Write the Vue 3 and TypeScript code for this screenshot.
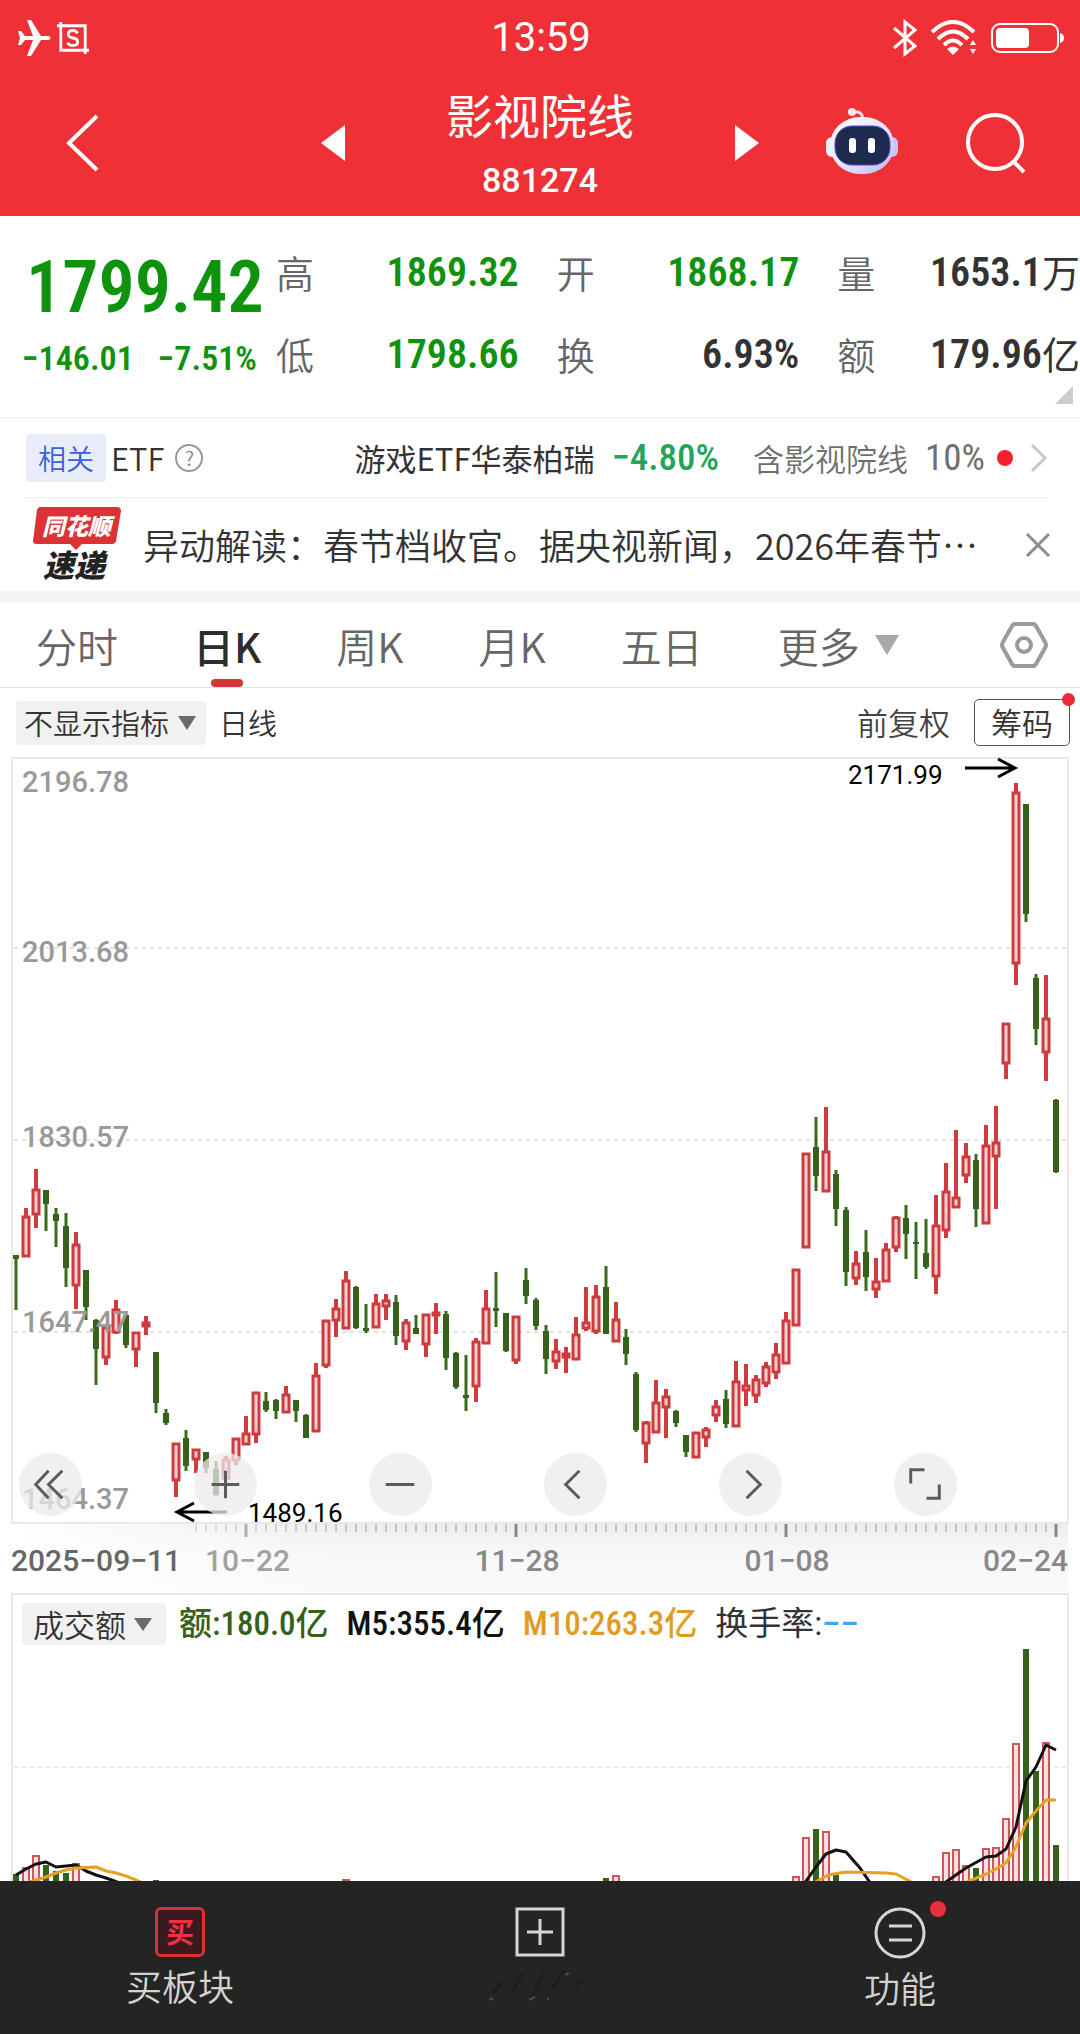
<script setup lang="ts">
type Candle = [up: number, high: number, top: number, bottom: number, low: number]

// up flag, then high, body top, body bottom and low as heights on the price panel
const candles: Candle[] = [
  [0, 1255, 1255, 1259, 1310], [1, 1208, 1216, 1257, 1257], [1, 1169, 1189, 1215, 1228], [0, 1190, 1190, 1204, 1231],
  [0, 1208, 1214, 1221, 1247], [0, 1213, 1226, 1268, 1287], [1, 1232, 1244, 1286, 1309], [0, 1270, 1270, 1307, 1320],
  [0, 1319, 1320, 1349, 1385], [1, 1325, 1327, 1358, 1365], [1, 1300, 1309, 1333, 1334], [0, 1314, 1315, 1345, 1348],
  [1, 1332, 1332, 1350, 1367], [1, 1316, 1322, 1327, 1335], [0, 1352, 1352, 1403, 1413], [0, 1409, 1413, 1423, 1425],
  [1, 1443, 1443, 1481, 1497], [0, 1430, 1438, 1466, 1471], [1, 1449, 1449, 1460, 1473], [0, 1452, 1452, 1468, 1473],
  [0, 1461, 1469, 1495, 1496], [1, 1456, 1459, 1479, 1479], [1, 1438, 1438, 1461, 1465], [1, 1416, 1433, 1445, 1445],
  [1, 1392, 1392, 1435, 1443], [0, 1392, 1401, 1410, 1412], [0, 1399, 1400, 1411, 1419], [1, 1386, 1394, 1413, 1413],
  [0, 1400, 1400, 1411, 1422], [0, 1414, 1415, 1438, 1438], [1, 1363, 1375, 1432, 1432], [1, 1320, 1320, 1366, 1368],
  [1, 1299, 1308, 1321, 1337], [1, 1271, 1280, 1329, 1329], [0, 1286, 1287, 1328, 1329], [0, 1304, 1328, 1331, 1333],
  [1, 1294, 1303, 1328, 1328], [1, 1294, 1300, 1307, 1320], [0, 1295, 1302, 1336, 1345], [1, 1319, 1322, 1342, 1350],
  [0, 1315, 1328, 1334, 1334], [1, 1314, 1314, 1345, 1357], [1, 1303, 1312, 1315, 1334], [0, 1311, 1314, 1358, 1370],
  [0, 1352, 1353, 1387, 1389], [0, 1355, 1395, 1398, 1411], [1, 1338, 1341, 1387, 1402], [1, 1290, 1308, 1344, 1344],
  [0, 1272, 1308, 1311, 1327], [0, 1313, 1313, 1351, 1352], [1, 1316, 1316, 1361, 1364], [0, 1268, 1280, 1296, 1304],
  [0, 1298, 1300, 1326, 1330], [0, 1325, 1331, 1359, 1374], [1, 1339, 1351, 1362, 1369], [1, 1347, 1353, 1358, 1373],
  [1, 1317, 1334, 1360, 1360], [1, 1287, 1322, 1329, 1331], [1, 1285, 1296, 1332, 1334], [0, 1266, 1287, 1334, 1334],
  [1, 1302, 1319, 1342, 1342], [0, 1329, 1337, 1354, 1365], [0, 1372, 1374, 1430, 1432], [1, 1421, 1422, 1444, 1463],
  [1, 1380, 1402, 1433, 1433], [1, 1389, 1396, 1408, 1438], [0, 1410, 1411, 1423, 1427], [0, 1435, 1435, 1452, 1457],
  [1, 1432, 1432, 1458, 1458], [1, 1427, 1429, 1438, 1447], [1, 1400, 1406, 1416, 1422], [0, 1390, 1399, 1424, 1428],
  [1, 1361, 1381, 1427, 1427], [1, 1364, 1385, 1391, 1406], [1, 1375, 1379, 1396, 1403], [1, 1362, 1366, 1384, 1387],
  [1, 1343, 1354, 1373, 1379], [1, 1312, 1320, 1364, 1364], [1, 1269, 1269, 1326, 1326], [1, 1153, 1153, 1248, 1248],
  [0, 1117, 1147, 1176, 1191], [1, 1107, 1151, 1192, 1192], [0, 1170, 1174, 1209, 1226], [0, 1207, 1210, 1272, 1286],
  [1, 1251, 1263, 1279, 1285], [0, 1230, 1252, 1277, 1291], [1, 1258, 1281, 1290, 1298], [1, 1243, 1249, 1282, 1282],
  [1, 1216, 1217, 1248, 1252], [0, 1205, 1218, 1234, 1259], [0, 1222, 1242, 1244, 1279], [0, 1219, 1253, 1267, 1269],
  [1, 1195, 1225, 1277, 1294], [1, 1163, 1191, 1231, 1238], [1, 1130, 1197, 1208, 1208], [1, 1143, 1156, 1176, 1183],
  [0, 1154, 1160, 1209, 1227], [1, 1125, 1145, 1224, 1224], [1, 1106, 1142, 1157, 1209], [1, 1023, 1023, 1064, 1079],
  [1, 783, 792, 964, 985], [0, 804, 804, 914, 922], [0, 974, 978, 1029, 1045], [1, 975, 1018, 1053, 1081],
  [0, 1099, 1100, 1172, 1173],
]

// day index, up flag, top of the bar on the turnover panel
const volumes: [number, number, number][] = [
  [0, 0, 1874], [1, 1, 1867], [2, 1, 1855], [3, 0, 1865], [4, 0, 1871], [5, 0, 1873], [6, 1, 1863], [14, 0, 1880],
  [33, 1, 1879], [59, 0, 1878], [60, 1, 1875], [78, 1, 1876], [79, 1, 1837], [80, 0, 1829], [81, 1, 1831],
  [82, 0, 1875], [92, 1, 1876], [93, 1, 1852], [94, 1, 1849], [95, 1, 1865], [96, 0, 1868], [97, 1, 1848],
  [98, 1, 1847], [99, 1, 1818], [100, 1, 1743], [101, 0, 1649], [102, 0, 1771], [103, 1, 1742], [104, 0, 1845],
]

const ma5 = [
  '16,1875 26,1869 36,1864 46,1862 56,1867 66,1866 76,1865 86,1871 96,1875 106,1878 120,1883',
  '804,1884 816,1867 826,1854 836,1850 846,1852 860,1868 871,1884',
  '943,1884 966,1868 986,1857 996,1856 1006,1849 1016,1827 1026,1781 1036,1767 1046,1745 1056,1750',
]
const ma10 = [
  '26,1883 46,1877 56,1873 66,1870 76,1868 96,1867 106,1871 116,1873 126,1876 143,1883',
  '812,1884 828,1875 846,1872 886,1873 896,1874 915,1884',
  '962,1884 986,1874 996,1869 1006,1863 1016,1847 1026,1823 1036,1811 1046,1800 1056,1800',
]

const dayX = (i: number): number => 16 + i * 10
const gridLines = [948, 1140, 1332]
const priceLabels = [
  { y: 792, text: '2196.78' },
  { y: 962, text: '2013.68' },
  { y: 1147, text: '1830.57' },
  { y: 1332, text: '1647.47' },
  { y: 1509, text: '1464.37' },
]
const ticks = Array.from({ length: 87 }, (_, k) => ({ x: 196 + k * 10, major: k % 27 === 5 }))
const dates = [
  { x: 205, anchor: 'start', text: '10−22', cls: 'faint' },
  { x: 517, anchor: 'middle', text: '11−28', cls: '' },
  { x: 787, anchor: 'middle', text: '01−08', cls: '' },
  { x: 1068, anchor: 'end', text: '02−24', cls: '' },
]
const stats = [
  { k: '高', v: '1869.32', down: true }, { k: '开', v: '1868.17', down: true }, { k: '量', v: '1653.1', unit: '万' },
  { k: '低', v: '1798.66', down: true }, { k: '换', v: '6.93%' }, { k: '额', v: '179.96', unit: '亿' },
]
const tabs = ['分时', '日K', '周K', '月K', '五日']
const tools = [
  { label: '最早', d: 'M30 18L17 32L30 46M44 18L30 32L44 46' },
  { label: '放大', d: 'M32 18V46M18 32H46' },
  { label: '缩小', d: 'M17 32H46' },
  { label: '向左', d: 'M36 18L22 32L36 46' },
  { label: '向右', d: 'M28 18L42 32L28 46' },
  { label: '全屏', d: 'M17 31V17H31M33 46H46V32' },
]
</script>

<template>
  <div class="page">
    <div class="status">
      <div class="status-side">
        <svg width="34" height="36" viewBox="0 0 34 36" fill="#fff">
          <path d="M0 11h3l4 5h8L9 0h4l10 16h8q3 2 0 4h-8L13 36H9l6-16H7l-4 5H0l2-7z" />
        </svg>
        <svg width="32" height="32" viewBox="0 0 34 34" fill="none" stroke="#fff" stroke-width="3">
          <path d="M4 0V30H34M0 4H30V34" />
          <path d="M22 12Q20 9 17 9Q12 9 12 13Q12 16 17 17Q22 18 22 21Q22 25 17 25Q13 25 11 22" />
        </svg>
      </div>
      <time>13:59</time>
      <div class="status-side right">
        <svg width="26" height="38" viewBox="0 0 26 38" fill="none" stroke="#fff" stroke-width="3">
          <path d="M2 9L23 27L13 35V3L23 11L2 29" />
        </svg>
        <svg width="48" height="36" viewBox="0 0 48 36" fill="none" stroke="#fff" stroke-width="4">
          <path d="M2 12Q23-8 44 12M8 19Q23 4 38 19M14 25Q23 16 32 25" />
          <path d="M17 29Q23 24 29 29L23 35zM40 25L43 20L46 25zM40 29L43 34L46 29z" fill="#fff" stroke="none" />
        </svg>
        <svg width="74" height="32" viewBox="0 0 74 32">
          <rect x="2" y="2" width="66" height="28" rx="8" fill="none" stroke="#fff" stroke-width="2" />
          <rect x="6" y="6" width="33" height="20" rx="4" fill="#fff" />
          <path d="M70 11q4 1 4 5t-4 5z" fill="#fff" />
        </svg>
      </div>
    </div>

    <header class="head">
      <div class="head-side">
        <button aria-label="返回">
          <svg width="36" height="60" viewBox="0 0 36 60" fill="none" stroke="#fff" stroke-width="4">
            <path d="M33 3L5 30L33 57" />
          </svg>
        </button>
        <button aria-label="上一个">
          <svg width="24" height="36" viewBox="0 0 24 36" fill="#fff"><path d="M24 0V36L0 18z" /></svg>
        </button>
      </div>
      <div class="title">
        <h1>影视院线</h1>
        <p>881274</p>
      </div>
      <div class="head-side end">
        <button aria-label="下一个">
          <svg width="24" height="36" viewBox="0 0 24 36" fill="#fff"><path d="M0 0V36L24 18z" /></svg>
        </button>
        <button aria-label="智能助手">
          <svg width="72" height="72" viewBox="0 0 72 72">
            <defs>
              <linearGradient id="shell" x1="0" y1="0" x2="1" y2="1">
                <stop offset="0" stop-color="#fff" /><stop offset="0.5" stop-color="#e8e6fa" />
                <stop offset="1" stop-color="#b9b9f2" />
              </linearGradient>
            </defs>
            <path d="M26 5Q36 3 37 12" fill="none" stroke="#f6dfe6" stroke-width="3" />
            <circle cx="26" cy="5" r="4" fill="#fbe6ea" />
            <rect x="0" y="30" width="12" height="20" rx="6" fill="#eef0fb" />
            <rect x="60" y="30" width="12" height="20" rx="6" fill="#c6c4f3" />
            <rect x="4" y="10" width="64" height="57" rx="30" fill="url(#shell)" />
            <rect x="9" y="19" width="55" height="39" rx="17" fill="#1f2a4f" stroke="#5a4bd0" stroke-width="1" />
            <rect x="23" y="31" width="7" height="15" rx="3" fill="#fff" />
            <rect x="42" y="31" width="7" height="15" rx="3" fill="#fff" />
          </svg>
        </button>
        <button aria-label="搜索">
          <svg width="62" height="62" viewBox="0 0 62 62" fill="none" stroke="#fff" stroke-width="4">
            <circle cx="30" cy="30" r="27" /><path d="M48 49L59 60" />
          </svg>
        </button>
      </div>
    </header>

    <section class="quote">
      <div class="last">
        <strong>1799.42</strong>
        <div class="change"><span>−146.01</span><span>−7.51%</span></div>
      </div>
      <dl class="stats">
        <div v-for="s in stats" :key="s.k">
          <dt>{{ s.k }}</dt>
          <dd :class="{ down: s.down }">{{ s.v }}<span v-if="s.unit">{{ s.unit }}</span></dd>
        </div>
      </dl>
      <i class="corner"></i>
    </section>

    <section class="etf">
      <span class="badge">相关</span>
      <span class="etf-name">ETF</span>
      <button class="help" aria-label="说明">?</button>
      <a href="#" class="fund">游戏ETF华泰柏瑞</a>
      <span class="fund-pct">−4.80%</span>
      <span class="hold">含影视院线</span>
      <span class="hold-pct">10%</span>
      <i class="dot"></i>
      <svg width="18" height="30" viewBox="0 0 18 30" fill="none" stroke="#c8c8c8" stroke-width="3">
        <path d="M2 2L15 15L2 28" />
      </svg>
    </section>

    <section class="news">
      <div class="logo">
        <svg viewBox="0 0 88 44" width="88" height="44" fill="#dc3236">
          <path d="M7 0H84Q88 0 88 4L83 34Q82 37 79 37H49L43 43L37 37H3Q0 37 0 34L4 3Q5 0 7 0z" />
        </svg>
        <b class="logo-top">同花顺</b>
        <b class="logo-bottom">速递</b>
      </div>
      <a href="#">异动解读：春节档收官。据央视新闻，2026年春节…</a>
      <button aria-label="关闭">
        <svg width="26" height="26" viewBox="0 0 26 26" stroke="#8c8c8c" stroke-width="3">
          <path d="M2 2L24 24M24 2L2 24" />
        </svg>
      </button>
    </section>

    <nav class="tabs">
      <button v-for="t in tabs" :key="t" :class="{ active: t === '日K' }">{{ t }}</button>
      <button class="more">
        更多
        <svg width="24" height="20" viewBox="0 0 24 20" fill="#a8a8a8"><path d="M0 0H24L12 20z" /></svg>
      </button>
      <button class="gear" aria-label="设置">
        <svg width="50" height="48" viewBox="0 0 50 48" fill="none" stroke="#9a9a9a" stroke-width="4">
          <path d="M16 3H34Q36 3 37 5L46 21Q48 24 46 27L37 43Q36 45 34 45H16Q14 45 13 43L4 27Q2 24 4 21L13 5Q14 3 16 3z" />
          <circle cx="25" cy="24" r="7" />
        </svg>
      </button>
    </nav>

    <div class="toolbar">
      <label class="picker">
        <select aria-label="主图指标"><option>不显示指标</option></select>
        <svg width="18" height="14" viewBox="0 0 18 14" fill="#6b6b6b"><path d="M0 0H18L9 14z" /></svg>
      </label>
      <span class="period">日线</span>
      <button class="adjust">前复权</button>
      <button class="chips">筹码<i></i></button>
    </div>

    <section class="chart">
      <svg class="plot" viewBox="0 757 1080 836">
        <defs>
          <linearGradient id="strip" x1="0" y1="0" x2="0" y2="1">
            <stop offset="0" stop-color="#ededed" /><stop offset="0.4" stop-color="#f7f7f7" />
            <stop offset="1" stop-color="#fafafa" />
          </linearGradient>
          <linearGradient id="veil" x1="0" y1="0" x2="1" y2="0">
            <stop offset="0" stop-color="#fff" /><stop offset="1" stop-color="#fff" stop-opacity="0" />
          </linearGradient>
        </defs>
        <rect x="12" y="1523" width="1056" height="70" fill="url(#strip)" />
        <line
          v-for="t in ticks" :key="t.x" :x1="t.x" :x2="t.x" y1="1524" :y2="t.major ? 1537 : 1532"
          :class="t.major ? 'tick major' : 'tick'"
        />
        <rect x="12" y="1524" width="340" height="69" fill="url(#veil)" />
        <rect x="12" y="758" width="1056" height="765" class="frame" />
        <line v-for="y in gridLines" :key="y" x1="14" x2="1068" :y1="y" :y2="y" class="grid" />
        <g v-for="(c, i) in candles" :key="i" :class="c[0] ? 'up' : 'dn'">
          <line :x1="dayX(i)" :x2="dayX(i)" :y1="c[1]" :y2="c[4]" />
          <rect v-if="c[0]" :x="dayX(i) - 3" :y="c[2] + 1" width="6" :height="Math.max(c[3] - c[2] - 2, 2)" />
          <rect v-else :x="dayX(i) - 3" :y="c[2]" width="6" :height="c[3] - c[2]" />
        </g>
        <text v-for="l in priceLabels" :key="l.y" x="22" :y="l.y" class="price">{{ l.text }}</text>
        <g class="mark">
          <path d="M965 768H1015M998 759L1015 768L998 777M227 1512H178M194 1503L177 1512L194 1521" />
          <text x="848" y="784">2171.99</text>
          <text x="248" y="1522">1489.16</text>
        </g>
        <text x="11" y="1571" class="date first">2025−09−11</text>
        <text
          v-for="d in dates" :key="d.text" :x="d.x" y="1571" :text-anchor="d.anchor"
          :class="['date', d.cls]"
        >{{ d.text }}</text>
      </svg>
      <div class="tools">
        <button v-for="t in tools" :key="t.label" :aria-label="t.label">
          <svg viewBox="0 0 64 64" fill="none" stroke="#5c5a5b" stroke-width="3"><path :d="t.d" /></svg>
        </button>
      </div>
    </section>

    <section class="turnover">
      <div class="legend">
        <label class="picker">
          <select aria-label="副图指标"><option>成交额</option></select>
          <svg width="18" height="13" viewBox="0 0 18 13" fill="#6b6b6b"><path d="M0 0H18L9 13z" /></svg>
        </label>
        <span class="g">额:180.0亿</span>
        <span class="k">M5:355.4亿</span>
        <span class="o">M10:263.3亿</span>
        <span class="r">换手率:<em>−−</em></span>
      </div>
      <svg class="plot" viewBox="0 1593 1080 288">
        <path d="M12 1881V1594H1068V1881" class="frame" />
        <line x1="14" x2="1068" y1="1767" y2="1767" class="grid" />
        <template v-for="v in volumes" :key="v[0]">
          <rect v-if="v[1]" :x="dayX(v[0]) - 3" :y="v[2] + 1" width="6" height="200" class="vol-up" />
          <rect v-else :x="dayX(v[0]) - 3" :y="v[2]" width="6" height="300" class="vol-dn" />
        </template>
        <polyline v-for="p in ma5" :key="p" :points="p" class="ma" stroke="#111" />
        <polyline v-for="p in ma10" :key="p" :points="p" class="ma" stroke="#e6a023" />
      </svg>
    </section>

    <footer class="dock">
      <button>
        <span class="buy">买</span>
        <span>买板块</span>
      </button>
      <button aria-label="添加">
        <svg width="50" height="50" viewBox="0 0 50 50" fill="none" stroke="#d6d6d6" stroke-width="3">
          <rect x="2" y="2" width="46" height="46" /><path d="M25 12V38M12 25H38" />
        </svg>
        <svg width="110" height="44" viewBox="0 0 110 44" fill="none" stroke-width="3">
          <path d="M8 32L18 20M28 30L38 12M48 34L58 14M66 28L80 10M90 24L98 20" stroke="#1d1d1e" />
          <path d="M4 39L8 37M44 39L50 36M62 38L64 38M80 14L84 12" stroke="#4a4a4b" stroke-width="2" />
        </svg>
      </button>
      <button>
        <span class="func">
          <svg width="52" height="52" viewBox="0 0 52 52" fill="none" stroke="#d6d6d6" stroke-width="3">
            <circle cx="26" cy="26" r="24" /><path d="M15 19H38M15 33H38" />
          </svg>
          <i></i>
        </span>
        <span>功能</span>
      </button>
    </footer>
  </div>
</template>

<style>
body {
  margin: 0;
  background: #fff;
}
</style>

<style scoped>
.page {
  --num: "Roboto Condensed", Roboto, "Noto Sans CJK SC", sans-serif;
  --green: #0f930f;
  font-family: "Noto Sans CJK SC", sans-serif;
  font-weight: 350;
  color: #333;
  background: #fff;
  overflow: hidden;
}
button,
select {
  font: inherit;
  color: inherit;
  background: none;
  border: 0;
  padding: 0;
  margin: 0;
  appearance: none;
  cursor: pointer;
}
svg {
  display: block;
  flex: none;
}
a {
  color: inherit;
  text-decoration: none;
}

.status {
  display: grid;
  grid-template-columns: 1fr auto 1fr;
  align-items: center;
  height: 76px;
  padding: 0 16px 0 18px;
  background: #ef3036;
  color: #fff;
}
.status time {
  font: 400 40px/48px Roboto, sans-serif;
}
.status-side {
  display: flex;
  align-items: center;
  gap: 5px;
}
.status-side.right {
  justify-content: flex-end;
  gap: 12px;
}

.head {
  display: grid;
  grid-template-columns: 1fr 390px 1fr;
  height: 140px;
  background: #ef3036;
  color: #fff;
}
.head-side {
  display: flex;
  align-items: center;
  justify-content: space-between;
  padding-left: 64px;
}
.head-side.end {
  padding: 0 53px 0 0;
}
.head-side svg {
  margin-bottom: 6px;
}
.title {
  display: flex;
  flex-direction: column;
  align-items: center;
  gap: 12px;
  padding-top: 8px;
}
.title h1 {
  margin: 0;
  font-size: 47px;
  line-height: 60px;
  font-weight: 400;
}
.title p {
  margin: 0;
  font: 500 34px/48px Roboto, sans-serif;
}

.quote {
  position: relative;
  display: flex;
  height: 201px;
  border-bottom: 1px solid #ececec;
}
.last {
  flex: none;
  width: 276px;
  box-sizing: border-box;
  padding: 32px 0 0 22px;
  color: var(--green);
  font-family: var(--num);
}
.last strong {
  display: block;
  padding-left: 4px;
  font-size: 72px;
  line-height: 80px;
  font-weight: 600;
}
.change {
  display: flex;
  gap: 24px;
  font-size: 34px;
  line-height: 60px;
  font-weight: 600;
}
.stats {
  flex: 1;
  display: grid;
  grid-template-columns: repeat(3, 1fr);
  column-gap: 38px;
  align-content: start;
  margin: 0;
  padding-top: 16px;
}
.stats div {
  display: flex;
  justify-content: space-between;
  align-items: center;
  height: 82px;
}
.stats dt {
  padding-bottom: 4px;
  font-size: 38px;
  color: #666;
}
.stats dd {
  display: flex;
  align-items: center;
  margin: 0;
  font: 600 40px/48px var(--num);
}
.stats dd span {
  padding-bottom: 4px;
  font: 400 38px/48px "Noto Sans CJK SC", sans-serif;
}
.stats .down {
  color: var(--green);
}
.corner {
  position: absolute;
  right: 7px;
  bottom: 13px;
  border: 9px solid;
  border-color: transparent #ccc #ccc transparent;
}

.etf {
  display: flex;
  align-items: center;
  height: 79px;
  margin: 0 32px 0 26px;
  border-bottom: 1px solid #ececec;
  font-size: 31px;
  line-height: 46px;
}
.badge {
  width: 80px;
  font-size: 28px;
  line-height: 48px;
  text-align: center;
  color: #3a62d8;
  background: #e9edfb;
  border-radius: 4px;
}
.etf-name {
  margin-left: 5px;
}
.help {
  width: 28px;
  height: 28px;
  margin-left: 11px;
  border: 2px solid #999;
  border-radius: 50%;
  font-size: 20px;
  line-height: 24px;
  color: #888;
}
.fund {
  margin-left: auto;
  font-weight: 400;
}
.fund-pct,
.hold-pct {
  font: 500 37px/44px var(--num);
}
.fund-pct {
  margin-left: 17px;
  color: #21a559;
}
.hold {
  margin-left: 34px;
  color: #6f6f6f;
}
.hold-pct {
  margin-left: 17px;
  font-weight: 400;
  color: #6f6f6f;
}
.dot {
  width: 16px;
  height: 16px;
  margin: 0 17px 0 12px;
  border-radius: 50%;
  background: #f5222d;
}

.news {
  display: flex;
  align-items: center;
  height: 93px;
  padding: 0 29px 0 33px;
  border-bottom: 12px solid #f5f3f4;
}
.logo {
  position: relative;
  flex: none;
  width: 88px;
  height: 76px;
}
.logo b {
  position: absolute;
  font-weight: 900;
  font-style: italic;
}
.logo-top {
  left: 9px;
  top: 2px;
  font-size: 23px;
  line-height: 32px;
  color: #fff;
}
.logo-bottom {
  left: 10px;
  top: 40px;
  font-size: 31px;
  line-height: 34px;
  color: #222;
}
.news a {
  margin: 0 auto 0 22px;
  padding-bottom: 2px;
  white-space: nowrap;
  font-size: 36px;
  line-height: 52px;
}

.tabs {
  display: flex;
  align-items: center;
  gap: 75px;
  height: 84px;
  padding: 0 31px 0 36px;
  border-bottom: 1px solid #e2e2e2;
  font-size: 41px;
  color: #666;
}
.tabs button {
  position: relative;
  height: 84px;
  line-height: 82px;
}
.tabs .active {
  color: #2d2d2d;
  font-weight: 500;
}
.tabs .active::after {
  content: "";
  position: absolute;
  left: 50%;
  bottom: 0;
  width: 32px;
  height: 8px;
  margin-left: -16px;
  border-radius: 4px;
  background: #d5353a;
}
.more {
  display: flex;
  align-items: center;
  gap: 15px;
}
.tabs .gear {
  margin-left: auto;
}

.toolbar {
  display: flex;
  align-items: center;
  height: 69px;
  padding: 0 10px 0 16px;
  font-size: 29px;
}
.picker {
  display: flex;
  align-items: center;
  gap: 8px;
  padding: 0 10px 0 8px;
  background: #f1f1f1;
  border-radius: 4px;
}
.picker select {
  height: 44px;
  padding-bottom: 2px;
}
.period {
  margin-left: 13px;
  padding-bottom: 2px;
}
.adjust {
  margin-left: auto;
  padding-bottom: 2px;
  font-size: 31px;
  color: #444;
}
.chips {
  position: relative;
  width: 96px;
  height: 47px;
  margin-left: 24px;
  padding-bottom: 2px;
  border: 1px solid #555;
  border-radius: 5px;
  font-size: 31px;
  line-height: 42px;
}
.chips i {
  position: absolute;
  top: -7px;
  right: -6px;
  width: 13px;
  height: 13px;
  border-radius: 50%;
  background: #e92b38;
}

.chart,
.turnover {
  position: relative;
}
.plot {
  width: 100%;
  height: auto;
}
.frame {
  fill: none;
  stroke: #e8e8e8;
  stroke-width: 2;
}
.grid {
  stroke: #e2e2e2;
  stroke-width: 2;
  stroke-dasharray: 4 4;
}
.turnover .grid {
  stroke: #d8d8d8;
  stroke-width: 1;
}
.up line {
  stroke: #cf3b3e;
  stroke-width: 4;
}
.up rect {
  fill: #fbd0d2;
  stroke: #cc3c3f;
  stroke-width: 3;
}
.dn line {
  stroke: #3a6a1c;
  stroke-width: 3;
}
.dn rect {
  fill: #35611a;
}
.tick {
  stroke: #999;
  stroke-width: 1;
}
.tick.major {
  stroke: #888;
  stroke-width: 3;
}
.price {
  font: 500 29px Roboto, sans-serif;
  fill: #999;
}
.mark path {
  fill: none;
  stroke: #000;
  stroke-width: 3;
}
.mark text {
  font: 400 26px Roboto, sans-serif;
  fill: #000;
}
.date {
  font: 500 30px Roboto, sans-serif;
  fill: #888;
}
.date.first {
  fill: #666;
}
.date.faint {
  fill: #a2a2a2;
}
.tools {
  position: absolute;
  left: 19px;
  right: 123px;
  bottom: 77px;
  display: flex;
  justify-content: space-between;
}
.tools button {
  width: 63px;
  height: 63px;
  border-radius: 50%;
  background: rgba(236, 234, 235, 0.75);
}

.legend {
  position: absolute;
  left: 22px;
  top: 10px;
  display: flex;
  align-items: center;
  font-size: 31px;
  line-height: 42px;
  white-space: nowrap;
}
.legend .picker {
  padding: 0 14px 0 11px;
}
.legend select {
  height: 42px;
}
.legend > span {
  font-family: var(--num);
  font-size: 33px;
  font-weight: 500;
  margin-left: 18px;
}
.legend .g {
  margin-left: 13px;
  color: #35611a;
}
.legend .k {
  color: #111;
}
.legend .o {
  color: #e09c22;
}
.legend .r {
  font-weight: 400;
}
.legend em {
  font: 500 33px/42px Roboto, sans-serif;
  color: #3fa9ea;
}
.vol-up {
  fill: #fbdfe3;
  stroke: #cf5558;
  stroke-width: 2;
}
.vol-dn {
  fill: #35611a;
}
.ma {
  fill: none;
  stroke-width: 3;
  stroke-linejoin: round;
}

.dock {
  display: grid;
  grid-template-columns: repeat(3, 1fr);
  height: 153px;
  background: #242425;
  color: #d2d2d2;
  font-size: 36px;
}
.dock button {
  display: flex;
  flex-direction: column;
  align-items: center;
  gap: 4px;
  padding-top: 26px;
  line-height: 48px;
}
.buy {
  width: 50px;
  height: 50px;
  box-sizing: border-box;
  border: 3px solid #d8323b;
  border-radius: 6px;
  background: #3a1a1e;
  color: #f4323e;
  font-size: 28px;
  line-height: 42px;
  font-weight: 700;
}
.func {
  position: relative;
}
.func i {
  position: absolute;
  top: -6px;
  right: -20px;
  width: 16px;
  height: 16px;
  border-radius: 50%;
  background: #e92f39;
}
</style>
